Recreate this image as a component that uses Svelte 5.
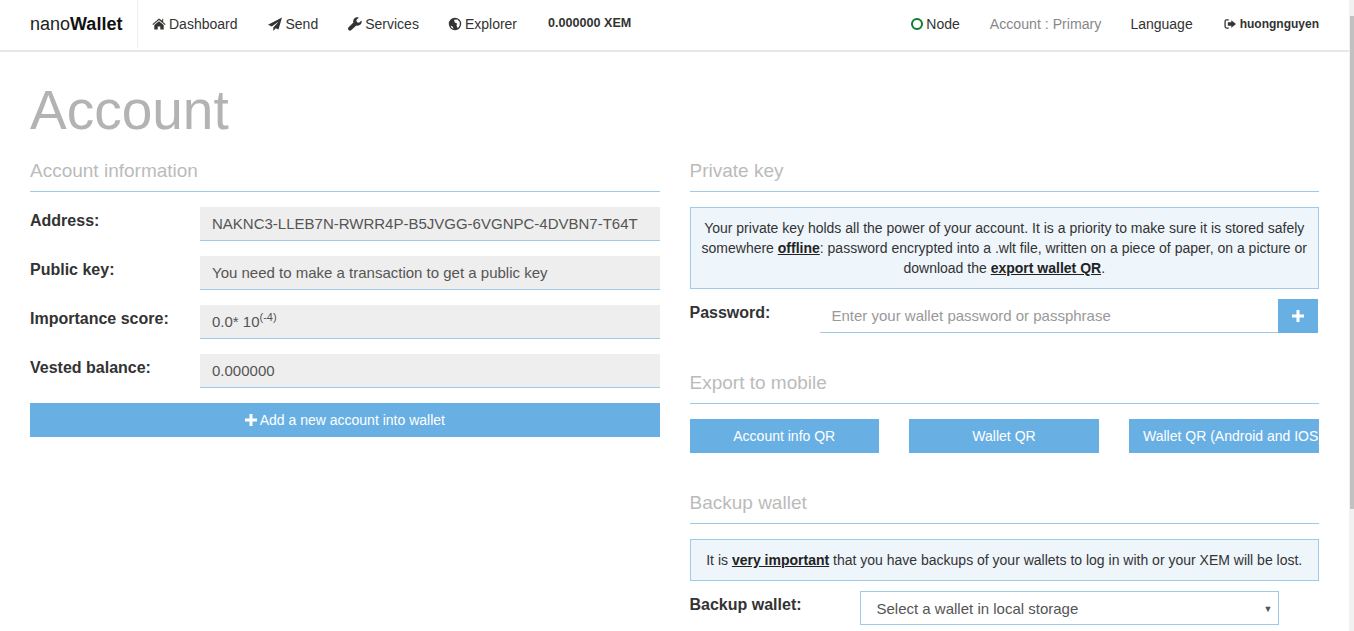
<script>
  const navItems = [
    { icon: "home", text: "Dashboard" },
    { icon: "send", text: "Send" },
    { icon: "wrench", text: "Services" },
    { icon: "globe", text: "Explorer" },
  ];

  const accountRows = [
    { label: "Address:", value: "NAKNC3-LLEB7N-RWRR4P-B5JVGG-6VGNPC-4DVBN7-T64T" },
    { label: "Public key:", value: "You need to make a transaction to get a public key" },
    { label: "Importance score:", value: "0.0* 10", sup: "(-4)" },
    { label: "Vested balance:", value: "0.000000" },
  ];

  const icons = {
    home: "M7 1.600.4 7.200l.7.8L7 3.100l5.900 4.900.7-.8-2.400-2V1.800H10.300v1.900zM7 4.200 2.300 8.100v4.500h3.400V9.400h2.600v3.200h3.400V8.100z",
    send: "M14 .5 0 7.800l3.800 1.700L10.800 4.500 5.300 10.600V14l2.500-2.700 2.700 1.100z",
    wrench: "M13.500 3.400 11 5.800 9 5.200 8.300 3.100 10.800.7C9.300-.1 7.500.2 6.300 1.400 5.200 2.500 4.900 4.100 5.400 5.500L.6 10.300c-.8.800-.8 2 0 2.800s2 .8 2.800 0L8.300 8.400c1.400.5 3.100.2 4.200-.9 1.200-1.200 1.500-2.800 1-4.100z",
    globe: "M7 .8A6.200 6.200 0 1 0 7 13.200 6.200 6.200 0 0 0 7 .8zM6 2.800 9.500 2.500 11.800 5 11.700 8.500 9.800 11.200 8.500 8.800 9 6.500 6.800 5.600zM2.400 8.400 4.600 9.400 5.600 11.800 3.800 11z",
  };
</script>

<div class="page">
  <nav class="navbar">
    <div class="brand">nano<b>Wallet</b></div>
    <ul class="nav-left">
      {#each navItems as item}
        <li class={item.icon}>
          <svg class="icon" viewBox="0 0 14 14" aria-hidden="true"><path fill-rule="evenodd" d={icons[item.icon]} /></svg>
          {item.text}
        </li>
      {/each}
      <li class="balance">0.000000 XEM</li>
    </ul>
    <ul class="nav-right">
      <li class="node"><span class="dot"></span>Node</li>
      <li class="muted">Account : Primary</li>
      <li>Language</li>
      <li class="user">
        <svg class="icon small" viewBox="0 0 14 14" aria-hidden="true">
          <path d="M5.500 1.500H3A2.500 2.500 0 0 0 .5 4v6A2.500 2.500 0 0 0 3 12.500H5.500V11H3A1 1 0 0 1 2 10V4A1 1 0 0 1 3 3H5.500zM8.500 2.500 14 7 8.500 11.500V9H4.500V5H8.500z" />
        </svg>
        huongnguyen
      </li>
    </ul>
  </nav>

  <main class="content">
    <h1>Account</h1>
    <div class="columns">
      <section>
        <h2>Account information</h2>
        {#each accountRows as row}
          <div class="row">
            <div class="label">{row.label}</div>
            <div class="value">{row.value}{#if row.sup}<sup>{row.sup}</sup>{/if}</div>
          </div>
        {/each}
        <button class="btn wide">
          <svg class="plus" viewBox="0 0 12 12" aria-hidden="true"><path d="M4.500 0h3v4.500H12v3H7.500V12h-3V7.500H0v-3h4.500z" /></svg>
          Add a new account into wallet
        </button>
      </section>

      <section>
        <h2>Private key</h2>
        <div class="alert tall">
          Your private key holds all the power of your account. It is a priority to make sure it is stored safely
          somewhere <a href="#offline">offline</a>: password encrypted into a .wlt file, written on a piece of paper, on a picture or
          download the <a href="#qr">export wallet QR</a>.
        </div>
        <div class="password">
          <div class="label pw-label">Password:</div>
          <input type="password" placeholder="Enter your wallet password or passphrase" />
          <button class="btn add" aria-label="Add">
            <svg class="plus" viewBox="0 0 12 12" aria-hidden="true"><path d="M4.500 0h3v4.500H12v3H7.500V12h-3V7.500H0v-3h4.500z" /></svg>
          </button>
        </div>

        <h2 class="sub">Export to mobile</h2>
        <div class="qr-buttons">
          <button class="btn">Account info QR</button>
          <button class="btn">Wallet QR</button>
          <button class="btn clip">Wallet QR (Android and IOS)</button>
        </div>

        <h2 class="sub">Backup wallet</h2>
        <div class="alert">
          It is <a href="#important">very important</a> that you have backups of your wallets to log in with or your XEM will be lost.
        </div>
        <div class="backup-row">
          <div class="label bk-label">Backup wallet:</div>
          <div class="select">Select a wallet in local storage<span class="caret">▼</span></div>
        </div>
      </section>
    </div>
  </main>

  <div class="scrollbar"><div class="thumb"></div></div>
</div>

<style>
  :global(body) {
    font-family: "Liberation Sans", Arial, sans-serif;
    color: #333;
    background: #fff;
    overflow: hidden;
  }
  .page {
    height: 631px;
    overflow: hidden;
    padding-right: 5px;
    position: relative;
    box-sizing: border-box;
  }
  .scrollbar {
    position: absolute;
    right: 0;
    top: 0;
    bottom: 0;
    width: 5px;
    background: #f1f1f1;
  }
  .thumb {
    position: absolute;
    right: 0;
    top: 16px;
    width: 4px;
    height: 493px;
    background: #c1c1c1;
  }
  .navbar {
    display: flex;
    align-items: stretch;
    height: 50px;
    border-bottom: 2px solid #e7e7e7;
    font-size: 14px;
  }
  .brand {
    width: 138px;
    box-sizing: border-box;
    padding-left: 30px;
    font-size: 18px;
    line-height: 48px;
    color: #222;
    border-right: 1px solid #eee;
    margin-bottom: 2px;
  }
  .brand b {
    color: #111;
  }
  ul {
    list-style: none;
    margin: 0;
    padding: 0 0 2px;
    display: flex;
    align-items: center;
  }
  .nav-left {
    gap: 30px;
    padding-left: 14px;
  }
  .nav-right {
    margin-left: auto;
    gap: 31px;
    padding-right: 30px;
  }
  li {
    display: flex;
    align-items: center;
    white-space: nowrap;
    color: #333;
  }
  .icon {
    width: 14px;
    height: 14px;
    fill: #333;
    margin-right: 3px;
  }
  .send .icon {
    margin-right: 4px;
  }
  .wrench {
    margin-right: -1px;
  }
  .icon.small {
    width: 12px;
    height: 12px;
    margin-right: 4px;
  }
  .balance {
    font-size: 12.600px;
    font-weight: bold;
    margin: -2px 0 0 1px;
  }
  .node {
    margin-right: -1px;
  }
  .dot {
    width: 12px;
    height: 12px;
    box-sizing: border-box;
    border: 2px solid #0a7d2c;
    border-radius: 50%;
    margin-right: 3px;
  }
  .muted {
    color: #888;
    font-size: 14.150px;
    margin-right: -2px;
  }
  .user {
    font-size: 12px;
    font-weight: bold;
  }
  .content {
    padding: 0 30px;
  }
  h1 {
    margin: 27px 0 10px;
    font-size: 55px;
    font-weight: normal;
    line-height: 62px;
    color: #b3b3b3;
  }
  .columns {
    display: grid;
    grid-template-columns: 1fr 1fr;
    gap: 30px;
  }
  h2 {
    margin: 0 0 15px;
    padding: 8px 0;
    height: 24px;
    line-height: 24px;
    font-size: 19px;
    font-weight: normal;
    color: #bbb;
    border-bottom: 1px solid #9ecbea;
  }
  .row {
    display: flex;
    height: 34px;
    margin-bottom: 15px;
  }
  .label {
    font-size: 16px;
    font-weight: bold;
    color: #333;
    line-height: 28px;
  }
  .row .label {
    width: 170px;
  }
  .value {
    flex: 1;
    box-sizing: border-box;
    background: #eee;
    border-bottom: 1px solid #9ecbea;
    padding: 0 12px;
    font-size: 15px;
    line-height: 34px;
    color: #555;
  }
  sup {
    font-size: 11px;
    line-height: 0;
  }
  .btn {
    background: #68b0e4;
    color: #fff;
    border: none;
    height: 34px;
    font-family: inherit;
    font-size: 14px;
    padding: 0;
  }
  .wide {
    width: 100%;
    display: block;
  }
  .plus {
    width: 12px;
    height: 12px;
    fill: #fff;
    vertical-align: -1px;
  }
  .alert {
    border: 1px solid #9ecbea;
    background: #eef5fb;
    font-size: 14px;
    line-height: 20px;
    text-align: center;
    padding: 10px;
    color: #333;
  }
  .alert a {
    color: #222;
    font-weight: bold;
    text-decoration: underline;
  }
  .alert.tall {
    padding: 10px 6px;
  }
  .password {
    display: flex;
    margin-top: 10px;
    height: 34px;
    padding-right: 1px;
  }
  .pw-label {
    width: 130px;
  }
  input {
    flex: 1;
    min-width: 0;
    box-sizing: border-box;
    border: none;
    border-bottom: 1px solid #9ecbea;
    padding: 0 12px;
    font-family: inherit;
    font-size: 15px;
    outline: none;
  }
  input::placeholder {
    color: #999;
    opacity: 1;
  }
  .add {
    width: 40px;
  }
  .sub {
    margin-top: 30px;
  }
  .qr-buttons {
    display: grid;
    grid-template-columns: 189.500px 190px 190px;
    gap: 30px;
  }
  .clip {
    overflow: hidden;
    white-space: nowrap;
    padding: 0 0 0 14px;
    text-align: left;
  }
  .backup-row {
    display: flex;
    margin-top: 10px;
  }
  .bk-label {
    width: 170px;
  }
  .select {
    width: 419px;
    height: 34px;
    box-sizing: border-box;
    border: 1px solid #9ecbea;
    padding-left: 16px;
    line-height: 34px;
    font-size: 15px;
    color: #555;
    position: relative;
  }
  .caret {
    position: absolute;
    right: 5px;
    top: 0;
    font-size: 9px;
  }
</style>
